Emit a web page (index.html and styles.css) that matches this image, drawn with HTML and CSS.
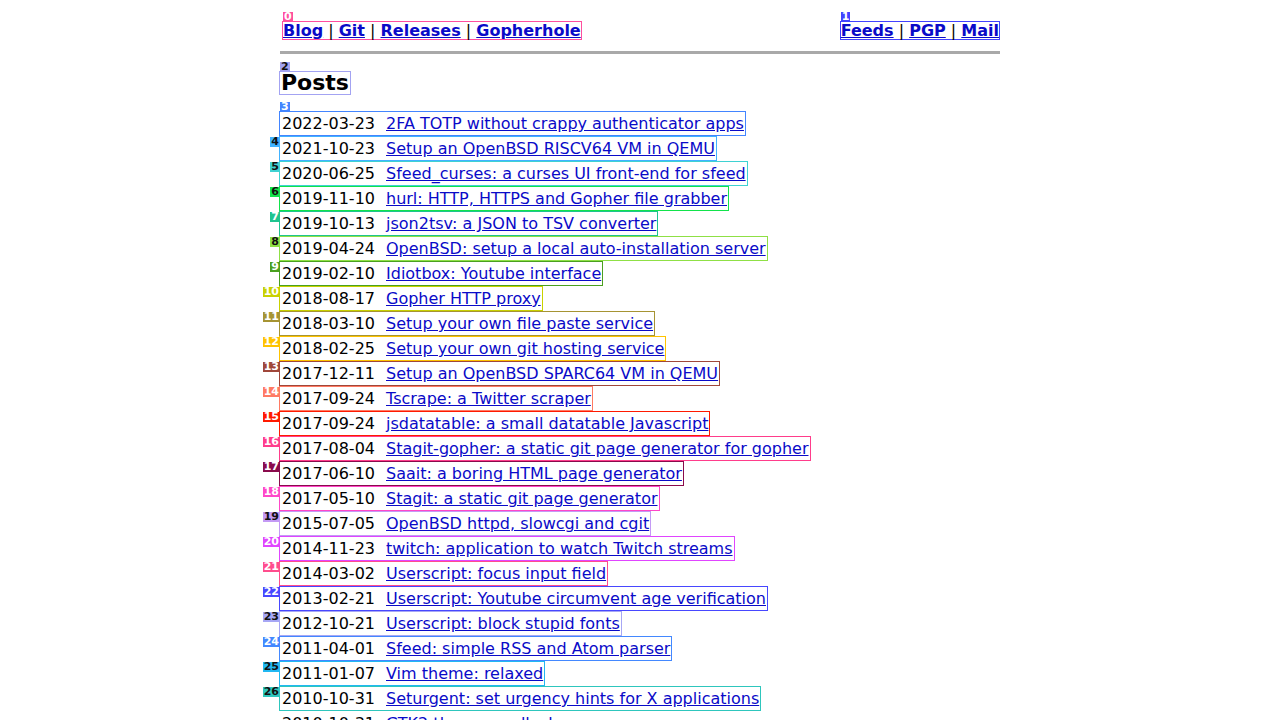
FILE: index.html
```html
<!DOCTYPE html>
<html lang="en">
<head>
<meta charset="utf-8">
<title>Codemadness</title>
<link rel="stylesheet" href="styles.css">
</head>
<body>
<div class="page">
  <header class="menu">
    <span class="box hbox m0"><span class="lbl up">0</span><a href="#">Blog</a> | <a href="#">Git</a> | <a href="#">Releases</a> | <a href="#">Gopherhole</a></span>
    <span class="box hbox m1"><span class="lbl up">1</span><a href="#">Feeds</a> | <a href="#">PGP</a> | <a href="#">Mail</a></span>
  </header>
  <main>
    <h1 class="box title m2"><span class="lbl up dark">2</span>Posts</h1>
    <div class="posts">
      <div class="box row m3"><span class="lbl up">3</span><span class="date">2022-03-23</span><a href="#">2FA TOTP without crappy authenticator apps</a></div>
      <div class="box row m4"><span class="lbl side dark">4</span><span class="date">2021-10-23</span><a href="#">Setup an OpenBSD RISCV64 VM in QEMU</a></div>
      <div class="box row m5"><span class="lbl side dark">5</span><span class="date">2020-06-25</span><a href="#">Sfeed_curses: a curses UI front-end for sfeed</a></div>
      <div class="box row m6"><span class="lbl side dark">6</span><span class="date">2019-11-10</span><a href="#">hurl: HTTP, HTTPS and Gopher file grabber</a></div>
      <div class="box row m7"><span class="lbl side">7</span><span class="date">2019-10-13</span><a href="#">json2tsv: a JSON to TSV converter</a></div>
      <div class="box row m8"><span class="lbl side dark">8</span><span class="date">2019-04-24</span><a href="#">OpenBSD: setup a local auto-installation server</a></div>
      <div class="box row m9"><span class="lbl side">9</span><span class="date">2019-02-10</span><a href="#">Idiotbox: Youtube interface</a></div>
      <div class="box row m10"><span class="lbl side">10</span><span class="date">2018-08-17</span><a href="#">Gopher HTTP proxy</a></div>
      <div class="box row m11"><span class="lbl side">11</span><span class="date">2018-03-10</span><a href="#">Setup your own file paste service</a></div>
      <div class="box row m12"><span class="lbl side">12</span><span class="date">2018-02-25</span><a href="#">Setup your own git hosting service</a></div>
      <div class="box row m13"><span class="lbl side">13</span><span class="date">2017-12-11</span><a href="#">Setup an OpenBSD SPARC64 VM in QEMU</a></div>
      <div class="box row m14"><span class="lbl side">14</span><span class="date">2017-09-24</span><a href="#">Tscrape: a Twitter scraper</a></div>
      <div class="box row m15"><span class="lbl side">15</span><span class="date">2017-09-24</span><a href="#">jsdatatable: a small datatable Javascript</a></div>
      <div class="box row m16"><span class="lbl side">16</span><span class="date">2017-08-04</span><a href="#">Stagit-gopher: a static git page generator for gopher</a></div>
      <div class="box row m17"><span class="lbl side">17</span><span class="date">2017-06-10</span><a href="#">Saait: a boring HTML page generator</a></div>
      <div class="box row m18"><span class="lbl side">18</span><span class="date">2017-05-10</span><a href="#">Stagit: a static git page generator</a></div>
      <div class="box row m19"><span class="lbl side dark">19</span><span class="date">2015-07-05</span><a href="#">OpenBSD httpd, slowcgi and cgit</a></div>
      <div class="box row m20"><span class="lbl side">20</span><span class="date">2014-11-23</span><a href="#">twitch: application to watch Twitch streams</a></div>
      <div class="box row m21"><span class="lbl side">21</span><span class="date">2014-03-02</span><a href="#">Userscript: focus input field</a></div>
      <div class="box row m22"><span class="lbl side">22</span><span class="date">2013-02-21</span><a href="#">Userscript: Youtube circumvent age verification</a></div>
      <div class="box row m23"><span class="lbl side dark">23</span><span class="date">2012-10-21</span><a href="#">Userscript: block stupid fonts</a></div>
      <div class="box row m24"><span class="lbl side">24</span><span class="date">2011-04-01</span><a href="#">Sfeed: simple RSS and Atom parser</a></div>
      <div class="box row m25"><span class="lbl side dark">25</span><span class="date">2011-01-07</span><a href="#">Vim theme: relaxed</a></div>
      <div class="box row m26"><span class="lbl side dark">26</span><span class="date">2010-10-31</span><a href="#">Seturgent: set urgency hints for X applications</a></div>
      <div class="row plain"><span class="date">2010-10-31</span><a href="#">GTK2 theme: mollusk</a></div>
    </div>
  </main>
</div>
</body>
</html>
```
FILE: styles.css
```css
html, body {
  margin: 0;
  padding: 0;
  background: #fff;
}

body {
  font-family: "DejaVu Sans", sans-serif;
  font-size: 16px;
  color: #000;
}

a {
  color: #0a0ac8;
}

.page {
  width: 720px;
  margin: 0 auto;
}

/* set-of-marks boxes */
.box {
  position: relative;
  border: 1px solid var(--c);
}

.lbl {
  position: absolute;
  background: var(--c);
  color: #fff;
  font: bold 11px/10px "DejaVu Sans", sans-serif;
  padding: 0 1px;
  white-space: nowrap;
}

.lbl.dark {
  color: #111;
}

.lbl.up {
  left: 0;
  bottom: 100%;
}

.lbl.side {
  right: 100%;
  top: 0;
}

/* header menu */
.menu {
  display: flex;
  justify-content: space-between;
  align-items: flex-start;
  padding: 21px 0 11px 2px;
  border-bottom: 3px solid #a9a9a9;
}

.hbox {
  display: inline-block;
  line-height: 17px;
}

.hbox a {
  font-weight: bold;
}

/* title */
.title {
  width: fit-content;
  margin: 17px 0 16px -1px;
  padding: 0 1px;
  font-size: 22px;
  line-height: 22px;
  font-weight: bold;
}

/* posts */
.posts {
  display: flex;
  flex-direction: column;
}

.row {
  display: flex;
  align-items: center;
  width: fit-content;
  height: 25px;
  box-sizing: border-box;
  margin-left: -1px;
  padding: 0 1px 0 2px;
  line-height: 19px;
  white-space: nowrap;
}

.row.plain {
  border: 1px solid transparent;
}

.date {
  width: 104px;
  flex: none;
}

/* mark colours */
.m0 { --c: #ff4f9f; }
.m1 { --c: #4242ff; }
.m2 { --c: #a3a3f2; }
.m3 { --c: #4385ff; }
.m4 { --c: #41b2ff; }
.m5 { --c: #3fd2d2; }
.m6 { --c: #12e34b; }
.m7 { --c: #1fc48f; }
.m8 { --c: #8fe045; }
.m9 { --c: #4aa020; }
.m10 { --c: #c9d100; }
.m11 { --c: #a69433; }
.m12 { --c: #ffc300; }
.m13 { --c: #a0473a; }
.m14 { --c: #ff7a63; }
.m15 { --c: #ff1a00; }
.m16 { --c: #ff3d8b; }
.m17 { --c: #8a0b4c; }
.m18 { --c: #ff47c8; }
.m19 { --c: #c49af5; }
.m20 { --c: #e045ff; }
.m21 { --c: #ff4d8d; }
.m22 { --c: #4747ff; }
.m23 { --c: #a7a7f5; }
.m24 { --c: #4388ff; }
.m25 { --c: #22b8f2; }
.m26 { --c: #2ec6bd; }
```
